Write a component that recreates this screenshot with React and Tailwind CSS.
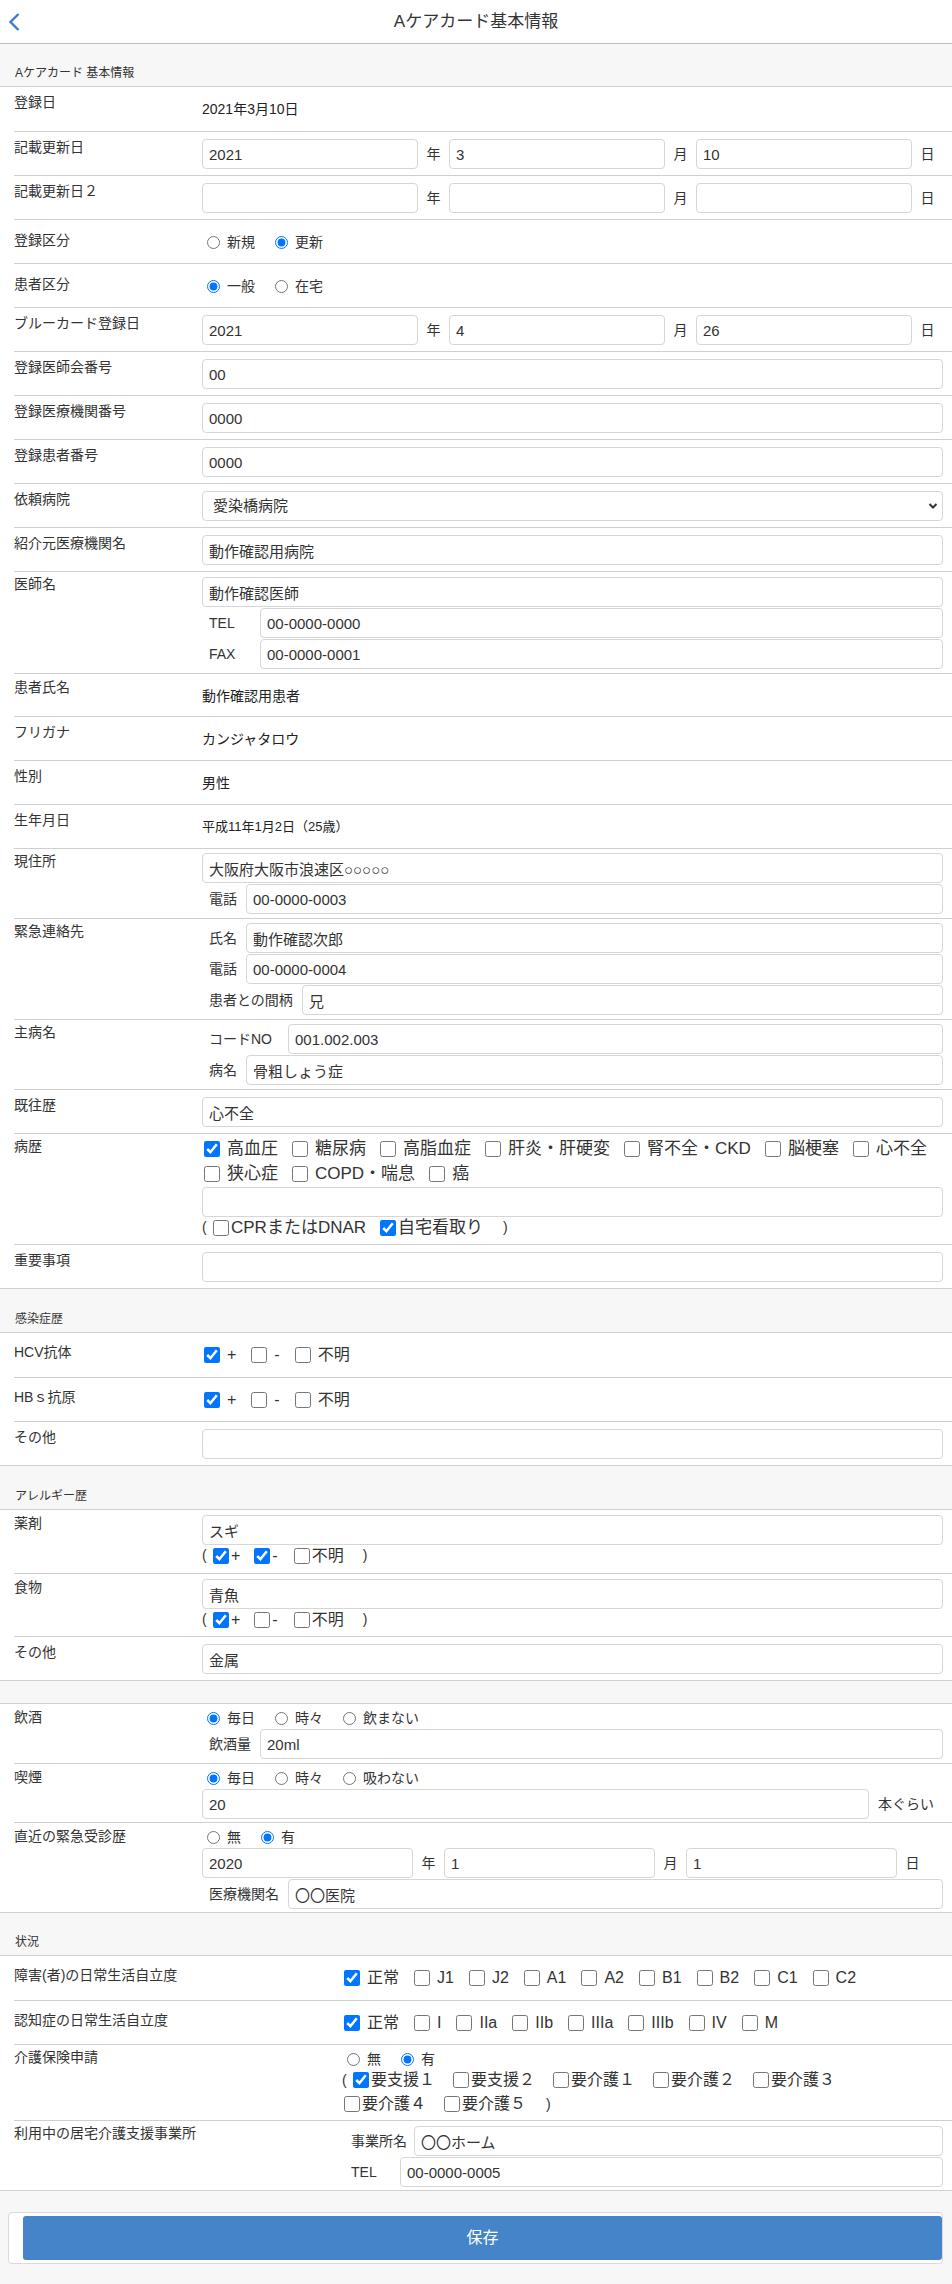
import React from 'react'

const FONT = { fontFamily: '"Liberation Sans", "Noto Sans CJK JP", sans-serif' }

const Input = ({ value = '', className = 'w-full' }) => (
  <input
    defaultValue={value}
    className={`h-[30px] min-w-0 rounded-[4px] border border-[#d6d6d6] bg-white px-[6px] text-[15px] text-[#333] outline-none ${className}`}
  />
)

const Section = ({ title, h, top = true }) => (
  <div
    className={`flex ${h} items-end border-b border-[#cfcfcf] bg-[#f7f7f7] pb-[4px] pl-[15px] text-[12px] leading-[17px] text-[#333] ${top ? 'border-t' : ''}`}
  >
    {title}
  </div>
)

const Row = ({ label, lpt = 'pt-[7px]', cpt = 'pt-[7px]', cpb = 'pb-[6px]', lw = 'w-[188px]', children }) => (
  <div className="flex">
    <div className={`${lw} shrink-0 ${lpt} text-[14px] leading-[17px] text-[#333]`}>{label}</div>
    <div className={`min-w-0 flex-1 pr-[9px] ${cpt} ${cpb}`}>{children}</div>
  </div>
)

const Unit = ({ children }) => (
  <span className="w-[31px] shrink-0 text-center text-[14px] text-[#333]">{children}</span>
)

const DateInputs = ({ y, m, d, className = '' }) => (
  <div className={`flex items-center ${className}`}>
    <Input value={y} className="flex-1" />
    <Unit>年</Unit>
    <Input value={m} className="flex-1" />
    <Unit>月</Unit>
    <Input value={d} className="flex-1" />
    <Unit>日</Unit>
  </div>
)

const Sub = ({ label, w, value, pl = 'pl-[7px]' }) => (
  <div className={`flex items-center ${pl}`}>
    <span className={`${w} shrink-0 text-[14px] text-[#333]`}>{label}</span>
    <Input value={value} className="flex-1" />
  </div>
)

const Text = ({ children, size = 'text-[14px]' }) => (
  <div className={`flex h-[30px] items-center ${size} text-[#222]`}>{children}</div>
)

const Radio = ({ name, label, checked }) => (
  <label className="mr-[15px] inline-flex items-center">
    <input type="radio" name={name} defaultChecked={checked} className="ml-[5px] h-[13px] w-[13px]" />
    <span className="ml-[7px] text-[14px] text-[#333]">{label}</span>
  </label>
)

const Check = ({ label, checked, gap = 'ml-[7px]', mr = 'mr-[13px]', size = 'text-[16px]' }) => (
  <label className={`inline-flex items-center ${mr}`}>
    <input type="checkbox" defaultChecked={checked} className="ml-[2px] h-4 w-4 shrink-0" />
    <span className={`${gap} ${size} leading-[20px] text-[#333]`}>{label}</span>
  </label>
)

const Paren = () => <span className="w-[9px] text-[14px] text-[#333]">(</span>
const Close = () => <span className="text-[14px] text-[#333]">)</span>

const Select = ({ value }) => (
  <div className="relative">
    <select className="h-[30px] w-full appearance-none rounded-[4px] border border-[#d6d6d6] bg-white pl-[10px] text-[15px] text-[#333] outline-none">
      <option>{value}</option>
    </select>
    <svg className="pointer-events-none absolute right-[5px] top-[11px]" width="10" height="8" viewBox="0 0 10 8">
      <polyline points="1.5,2 5,5.5 8.5,2" fill="none" stroke="#333" strokeWidth="2" />
    </svg>
  </div>
)

const Group = ({ children }) => <div className="ml-[14px] divide-y divide-[#cfcfcf]">{children}</div>

const App = () => {
  return (
    <div className="min-h-screen bg-white" style={FONT}>
      {/* header */}
      <div className="grid h-[44px] grid-cols-[1fr_auto_1fr] items-center border-b border-[#bdbdbd] bg-white">
        <div className="pl-[7px]">
          <svg width="14" height="20" viewBox="0 0 14 20">
            <polyline points="11.5,2 3.5,10 11.5,18" fill="none" stroke="#3d7cc9" strokeWidth="2.4" />
          </svg>
        </div>
        <div className="text-[17px] text-[#333]">Aケアカード基本情報</div>
        <div />
      </div>

      <Section title="Aケアカード 基本情報" h="h-[43px]" top={false} />
      <Group>
        <Row label="登録日" cpb="pb-[7px]">
          <Text>2021年3月10日</Text>
        </Row>
        <Row label="記載更新日">
          <DateInputs y="2021" m="3" d="10" />
        </Row>
        <Row label="記載更新日２">
          <DateInputs />
        </Row>
        <Row label="登録区分" lpt="pt-[12px]">
          <div className="flex h-[30px] items-center">
            <Radio name="kubun" label="新規" />
            <Radio name="kubun" label="更新" checked />
          </div>
        </Row>
        <Row label="患者区分" lpt="pt-[12px]">
          <div className="flex h-[30px] items-center">
            <Radio name="kanja" label="一般" checked />
            <Radio name="kanja" label="在宅" />
          </div>
        </Row>
        <Row label="ブルーカード登録日">
          <DateInputs y="2021" m="4" d="26" />
        </Row>
        <Row label="登録医師会番号">
          <Input value="00" />
        </Row>
        <Row label="登録医療機関番号">
          <Input value="0000" />
        </Row>
        <Row label="登録患者番号">
          <Input value="0000" />
        </Row>
        <Row label="依頼病院">
          <Select value="愛染橋病院" />
        </Row>
        <Row label="紹介元医療機関名">
          <Input value="動作確認用病院" />
        </Row>
        <Row label="医師名" lpt="pt-[4px]" cpt="pt-[5px]" cpb="pb-[4px]">
          <div className="flex flex-col gap-[1px]">
            <Input value="動作確認医師" />
            <Sub label="TEL" w="w-[51px]" value="00-0000-0000" />
            <Sub label="FAX" w="w-[51px]" value="00-0000-0001" />
          </div>
        </Row>
        <Row label="患者氏名" lpt="pt-[5px]" cpt="pt-[7px]" cpb="pb-[5px]">
          <Text>動作確認用患者</Text>
        </Row>
        <Row label="フリガナ">
          <Text>カンジャタロウ</Text>
        </Row>
        <Row label="性別">
          <Text>男性</Text>
        </Row>
        <Row label="生年月日">
          <Text size="text-[13px]">平成11年1月2日（25歳）</Text>
        </Row>
        <Row label="現住所" lpt="pt-[4px]" cpt="pt-[4px]" cpb="pb-[4px]">
          <div className="flex flex-col gap-[1px]">
            <Input value="大阪府大阪市浪速区○○○○○" />
            <Sub label="電話" w="w-[37px]" value="00-0000-0003" />
          </div>
        </Row>
        <Row label="緊急連絡先" lpt="pt-[4px]" cpt="pt-[4px]" cpb="pb-[4px]">
          <div className="flex flex-col gap-[1px]">
            <Sub label="氏名" w="w-[37px]" value="動作確認次郎" />
            <Sub label="電話" w="w-[37px]" value="00-0000-0004" />
            <Sub label="患者との間柄" w="w-[93px]" value="兄" />
          </div>
        </Row>
        <Row label="主病名" lpt="pt-[4px]" cpt="pt-[4px]" cpb="pb-[4px]">
          <div className="flex flex-col gap-[1px]">
            <Sub label="コードNO" w="w-[79px]" value="001.002.003" />
            <Sub label="病名" w="w-[37px]" value="骨粗しょう症" />
          </div>
        </Row>
        <Row label="既往歴">
          <Input value="心不全" />
        </Row>
        <Row label="病歴" lpt="pt-[4px]" cpt="pt-[2px]" cpb="pb-[6px]">
          <div className="flex h-[25px] items-center">
            <Check label="高血圧" checked size="text-[17px]" mr="mr-[12px]" />
            <Check label="糖尿病" size="text-[17px]" mr="mr-[12px]" />
            <Check label="高脂血症" size="text-[17px]" mr="mr-[12px]" />
            <Check label="肝炎・肝硬変" size="text-[17px]" mr="mr-[12px]" />
            <Check label="腎不全・CKD" size="text-[17px]" mr="mr-[12px]" />
            <Check label="脳梗塞" size="text-[17px]" mr="mr-[12px]" />
            <Check label="心不全" size="text-[17px]" mr="mr-[12px]" />
          </div>
          <div className="flex h-[25px] items-center">
            <Check label="狭心症" size="text-[17px]" mr="mr-[12px]" />
            <Check label="COPD・喘息" size="text-[17px]" mr="mr-[12px]" />
            <Check label="癌" size="text-[17px]" mr="mr-[12px]" />
          </div>
          <Input value="" className="mt-[1px] w-full" />
          <div className="flex h-[21px] items-center">
            <Paren />
            <Check label="CPRまたはDNAR" gap="ml-[2px]" mr="mr-[12px]" size="text-[17px]" />
            <Check label="自宅看取り" checked gap="ml-[2px]" mr="mr-[20px]" size="text-[17px]" />
            <Close />
          </div>
        </Row>
        <Row label="重要事項">
          <Input value="" />
        </Row>
      </Group>

      <Section title="感染症歴" h="h-[45px]" />
      <Group>
        <Row label="HCV抗体" lpt="pt-[11px]" cpb="pb-[7px]">
          <div className="flex h-[30px] items-center">
            <Check label="+" checked />
            <Check label="-" />
            <Check label="不明" />
          </div>
        </Row>
        <Row label="HBｓ抗原" lpt="pt-[11px]">
          <div className="flex h-[30px] items-center">
            <Check label="+" checked />
            <Check label="-" />
            <Check label="不明" />
          </div>
        </Row>
        <Row label="その他">
          <Input value="" />
        </Row>
      </Group>

      <Section title="アレルギー歴" h="h-[45px]" />
      <Group>
        <Row label="薬剤" lpt="pt-[5px]" cpt="pt-[5px]" cpb="pb-[7px]">
          <Input value="スギ" />
          <div className="flex h-[21px] items-center">
            <Paren />
            <Check label="+" checked gap="ml-[2px]" mr="mr-[12px]" />
            <Check label="-" checked gap="ml-[2px]" mr="mr-[14px]" />
            <Check label="不明" gap="ml-[2px]" mr="mr-[19px]" />
            <Close />
          </div>
        </Row>
        <Row label="食物" lpt="pt-[5px]" cpt="pt-[5px]" cpb="pb-[6px]">
          <Input value="青魚" />
          <div className="flex h-[21px] items-center">
            <Paren />
            <Check label="+" checked gap="ml-[2px]" mr="mr-[12px]" />
            <Check label="-" gap="ml-[2px]" mr="mr-[14px]" />
            <Check label="不明" gap="ml-[2px]" mr="mr-[19px]" />
            <Close />
          </div>
        </Row>
        <Row label="その他">
          <Input value="金属" />
        </Row>
      </Group>

      <Section title="" h="h-[24px]" />
      <Group>
        <Row label="飲酒" lpt="pt-[5px]" cpt="pt-[3px]" cpb="pb-[4px]">
          <div className="flex h-[22px] items-center">
            <Radio name="drink" label="毎日" checked />
            <Radio name="drink" label="時々" />
            <Radio name="drink" label="飲まない" />
          </div>
          <Sub label="飲酒量" w="w-[51px]" value="20ml" />
        </Row>
        <Row label="喫煙" lpt="pt-[5px]" cpt="pt-[3px]" cpb="pb-[3px]">
          <div className="flex h-[22px] items-center">
            <Radio name="smoke" label="毎日" checked />
            <Radio name="smoke" label="時々" />
            <Radio name="smoke" label="吸わない" />
          </div>
          <div className="flex items-center">
            <Input value="20" className="flex-1" />
            <span className="px-[9px] text-[14px] text-[#333]">本ぐらい</span>
          </div>
        </Row>
        <Row label="直近の緊急受診歴" lpt="pt-[5px]" cpt="pt-[3px]" cpb="pb-[3px]">
          <div className="flex h-[22px] items-center">
            <Radio name="kyukyu" label="無" />
            <Radio name="kyukyu" label="有" checked />
          </div>
          <DateInputs y="2020" m="1" d="1" className="mr-[15px]" />
          <div className="mt-[1px]">
            <Sub label="医療機関名" w="w-[79px]" value="〇〇医院" />
          </div>
        </Row>
      </Group>

      <Section title="状況" h="h-[44px]" />
      <Group>
        <Row label="障害(者)の日常生活自立度" lw="w-[328px]" lpt="pt-[11px]" cpb="pb-[7px]">
          <div className="flex h-[30px] items-center">
            <Check label="正常" checked />
            <Check label="J1" />
            <Check label="J2" />
            <Check label="A1" />
            <Check label="A2" />
            <Check label="B1" />
            <Check label="B2" />
            <Check label="C1" />
            <Check label="C2" />
          </div>
        </Row>
        <Row label="認知症の日常生活自立度" lw="w-[328px]" lpt="pt-[11px]">
          <div className="flex h-[30px] items-center">
            <Check label="正常" checked />
            <Check label="I" />
            <Check label="IIa" />
            <Check label="IIb" />
            <Check label="IIIa" />
            <Check label="IIIb" />
            <Check label="IV" />
            <Check label="M" />
          </div>
        </Row>
        <Row label="介護保険申請" lw="w-[328px]" lpt="pt-[4px]" cpt="pt-[5px]" cpb="pb-[4px]">
          <div className="flex h-[18px] items-center">
            <Radio name="kaigo" label="無" />
            <Radio name="kaigo" label="有" checked />
          </div>
          <div className="flex h-[24px] items-center">
            <Paren />
            <Check label="要支援１" checked gap="ml-[2px]" mr="mr-[16px]" />
            <Check label="要支援２" gap="ml-[2px]" mr="mr-[16px]" />
            <Check label="要介護１" gap="ml-[2px]" mr="mr-[16px]" />
            <Check label="要介護２" gap="ml-[2px]" mr="mr-[16px]" />
            <Check label="要介護３" gap="ml-[2px]" mr="mr-[16px]" />
          </div>
          <div className="flex h-[24px] items-center">
            <Check label="要介護４" gap="ml-[2px]" mr="mr-[16px]" />
            <Check label="要介護５" gap="ml-[2px]" mr="mr-[20px]" />
            <Close />
          </div>
        </Row>
        <Row label="利用中の居宅介護支援事業所" lw="w-[328px]" lpt="pt-[4px]" cpt="pt-[5px]" cpb="pb-[3px]">
          <div className="flex flex-col gap-[1px]">
            <Sub label="事業所名" w="w-[63px]" value="〇〇ホーム" pl="pl-[9px]" />
            <Sub label="TEL" w="w-[49px]" value="00-0000-0005" pl="pl-[9px]" />
          </div>
        </Row>
      </Group>

      {/* footer */}
      <div className="border-t border-[#cfcfcf] bg-[#f7f7f7] pb-[20px] pl-[8px] pr-[9px] pt-[21px]">
        <div className="rounded-[4px] border border-[#dadada] bg-white pb-[3px] pl-[14px] pt-[3px]">
          <button className="flex h-[44px] w-full items-center justify-center rounded-[3px] bg-[#4584c9] text-[16px] text-white">
            保存
          </button>
        </div>
      </div>
    </div>
  )
}

export default App
